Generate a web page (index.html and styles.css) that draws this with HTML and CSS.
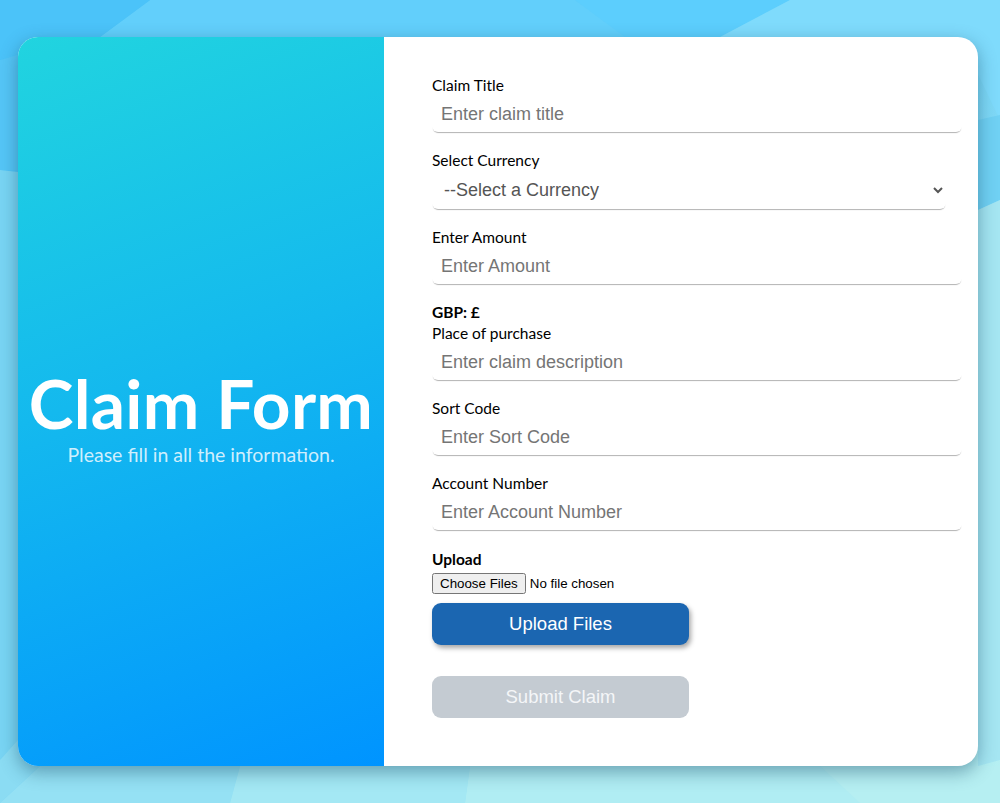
FILE: index.html
```html
<!DOCTYPE html>
<html lang="en">
<head>
<meta charset="utf-8">
<title>Claim Form</title>
<link rel="stylesheet" href="styles.css">
</head>
<body>
<svg class="backdrop" viewBox="0 0 1000 803" preserveAspectRatio="none" aria-hidden="true">
  <defs>
    <linearGradient id="bgg" x1="0" y1="0" x2="1" y2="1">
      <stop offset="0" stop-color="#47c0f8"/>
      <stop offset="0.45" stop-color="#6fd2f8"/>
      <stop offset="1" stop-color="#b8f1f2"/>
    </linearGradient>
  </defs>
  <rect width="1000" height="803" fill="url(#bgg)"/>
  <polygon points="150,0 575,0 625,37 100,37" fill="#62cffb"/>
  <polygon points="575,0 790,0 720,37 625,37" fill="#5ccefd"/>
  <polygon points="790,0 1000,0 1000,120 960,37 720,37" fill="#7fdbfc"/>
  <polygon points="0,0 150,0 100,37 0,60" fill="#4bc3f9"/>
  <polygon points="0,60 18,55 18,170 0,170" fill="#55c6f7"/>
  <polygon points="0,170 18,172 18,740 0,760" fill="#79d5f4"/>
  <polygon points="0,760 18,740 40,766 0,803" fill="#8bdcf3"/>
  <polygon points="0,803 40,766 240,766 230,803" fill="#95e1f4"/>
  <polygon points="230,803 240,766 470,766 465,803" fill="#a4e8f4"/>
  <polygon points="465,803 470,766 820,766 860,803" fill="#b0edf3"/>
  <polygon points="860,803 820,766 1000,766 1000,803" fill="#b6eff2"/>
  <polygon points="978,120 1000,115 1000,200 978,210" fill="#70d1f4"/>
  <polygon points="978,210 1000,200 1000,760 978,766" fill="#a5e6f2"/>
</svg>

<main class="card">
  <section class="intro">
    <h1 class="intro-title">Claim Form</h1>
    <p class="intro-sub">Please fill in all the information.</p>
  </section>

  <section class="panel">
    <form class="form">
      <div class="field">
        <label class="label" for="title">Claim Title</label>
        <input class="input" id="title" type="text" placeholder="Enter claim title">
      </div>

      <div class="field">
        <label class="label" for="currency">Select Currency</label>
        <select class="select" id="currency">
          <option>--Select a Currency</option>
          <option>GBP</option>
          <option>USD</option>
          <option>EUR</option>
        </select>
      </div>

      <div class="field">
        <label class="label" for="amount">Enter Amount</label>
        <input class="input" id="amount" type="text" placeholder="Enter Amount">
      </div>

      <div class="field">
        <div class="label strong">GBP: £</div>
        <label class="label" for="place">Place of purchase</label>
        <input class="input" id="place" type="text" placeholder="Enter claim description">
      </div>

      <div class="field">
        <label class="label" for="sort">Sort Code</label>
        <input class="input" id="sort" type="text" placeholder="Enter Sort Code">
      </div>

      <div class="field">
        <label class="label" for="account">Account Number</label>
        <input class="input" id="account" type="text" placeholder="Enter Account Number">
      </div>

      <div class="upload">
        <label class="label strong upload-label" for="files">Upload</label>
        <input class="file" id="files" type="file" multiple>
        <button class="btn btn-primary" type="button">Upload Files</button>
        <button class="btn btn-disabled" type="submit" disabled>Submit Claim</button>
      </div>
    </form>
  </section>
</main>
</body>
</html>
```

FILE: styles.css
```css
* { box-sizing: border-box; }

html, body {
  margin: 0;
  height: 803px;
  overflow: hidden;
}

body {
  position: relative;
  padding: 37px 22px 37px 18px;
  font-family: "Lato", "Open Sans", sans-serif;
}

.backdrop {
  position: absolute;
  inset: 0;
  width: 100%;
  height: 100%;
  z-index: 0;
}

.card {
  position: relative;
  z-index: 1;
  display: flex;
  width: 960px;
  height: 729px;
  border-radius: 20px;
  overflow: hidden;
  background: #fff;
  box-shadow: 0 6px 18px rgba(20, 70, 100, 0.45);
}

.intro {
  width: 366px;
  flex: none;
  display: flex;
  flex-direction: column;
  align-items: center;
  justify-content: center;
  background: linear-gradient(160deg, #21d4df 0%, #14b9ee 45%, #0094ff 100%);
  color: #fff;
  padding-top: 30px;
}

.intro-title {
  margin: 0;
  font-size: 67.5px;
  font-weight: 700;
  line-height: 1.08;
  letter-spacing: 0.3px;
}

.intro-sub {
  margin: 5px 0 0;
  font-size: 19.5px;
  line-height: 22px;
  color: rgba(235, 248, 255, 0.88);
}

.panel {
  flex: 1;
  padding: 38px 16px 0 48px;
}

.form {
  display: flex;
  flex-direction: column;
}

.field {
  display: flex;
  flex-direction: column;
  margin-bottom: 18px;
}

.label {
  display: block;
  font-size: 15.5px;
  line-height: 21px;
  color: #000;
}

.strong { font-weight: 700; }

.input {
  width: 530px;
  height: 36px;
  border: none;
  border-radius: 6px;
  box-shadow: 0 2px 1px -1px rgba(0, 0, 0, 0.3);
  padding: 0 9px;
  font-family: "Liberation Sans", Arial, sans-serif;
  font-size: 18px;
  color: #222;
  background: #fff;
  outline: none;
}

.input::placeholder { color: #757575; }

.select {
  width: 514px;
  height: 38px;
  border: none;
  border-radius: 6px;
  box-shadow: 0 2px 1px -1px rgba(0, 0, 0, 0.3);
  padding: 0 6px 0 8px;
  font-family: "Liberation Sans", Arial, sans-serif;
  font-size: 18px;
  color: #555;
  background: #fff;
  outline: none;
}

.upload {
  display: flex;
  flex-direction: column;
  align-items: flex-start;
}

.upload-label { margin-top: 1px; }

.file {
  font-family: "Liberation Sans", Arial, sans-serif;
  font-size: 13.33px;
  margin: 3px 0 0;
}

.btn {
  width: 257px;
  height: 42px;
  border: none;
  border-radius: 9px;
  font-family: "Liberation Sans", Arial, sans-serif;
  font-size: 18.5px;
  color: #fff;
}

.btn-primary {
  margin-top: 9px;
  background: #1b66b1;
  box-shadow: 2px 3px 5px rgba(0, 0, 0, 0.35);
}

.btn-disabled {
  margin-top: 31px;
  background: #c4cbd2;
  color: #f4f6f8;
}
```
